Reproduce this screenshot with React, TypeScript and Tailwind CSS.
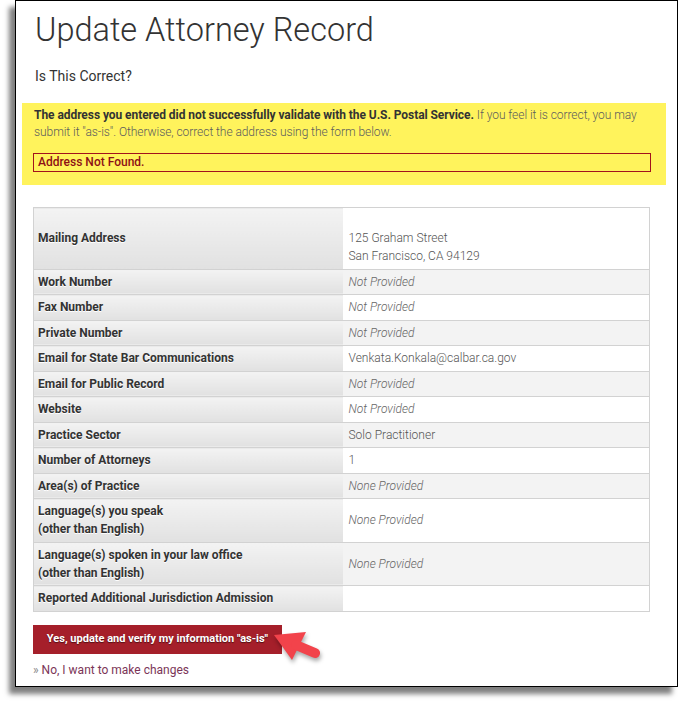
const rows: { label: string[]; value: string[]; empty?: boolean }[] = [
  { label: ['Mailing Address'], value: ['\u00a0', '125 Graham Street', 'San Francisco, CA 94129'] },
  { label: ['Work Number'], value: ['Not Provided'], empty: true },
  { label: ['Fax Number'], value: ['Not Provided'], empty: true },
  { label: ['Private Number'], value: ['Not Provided'], empty: true },
  { label: ['Email for State Bar Communications'], value: ['Venkata.Konkala@calbar.ca.gov'] },
  { label: ['Email for Public Record'], value: ['Not Provided'], empty: true },
  { label: ['Website'], value: ['Not Provided'], empty: true },
  { label: ['Practice Sector'], value: ['Solo Practitioner'] },
  { label: ['Number of Attorneys'], value: ['1'] },
  { label: ['Area(s) of Practice'], value: ['None Provided'], empty: true },
  { label: ['Language(s) you speak', '(other than English)'], value: ['None Provided'], empty: true },
  { label: ['Language(s) spoken in your law office', '(other than English)'], value: ['None Provided'], empty: true },
  { label: ['Reported Additional Jurisdiction Admission'], value: ['\u00a0'] },
];

// red callout arrow, drawn in page coordinates then shifted onto the button row
function Arrow() {
  return (
    <svg
      className="absolute left-[236px] top-0 drop-shadow-[1px_3px_2px_rgba(0,0,0,0.35)]"
      width="90"
      height="45"
      viewBox="0 0 90 45"
    >
      <g transform="translate(-269 -623)">
        <polygon points="274,633 306,630 292,658" fill="#f2434b" />
        <line x1="296" y1="643" x2="315" y2="651" stroke="#f2434b" strokeWidth="10" strokeLinecap="round" />
      </g>
    </svg>
  );
}

export default function App() {
  return (
    <div className="bg-white w-[678px] h-[701px] font-['Roboto',sans-serif]">
      <div className="ml-[15px] w-[663px] h-[687px] border border-black bg-white shadow-[-6px_7px_5px_rgba(0,0,0,0.5)]">
        <h1 className="pl-[19px] pt-[9px] text-[32.5px] leading-[40px] font-light text-[#333]">
          Update Attorney Record
        </h1>
        <p className="pl-[19px] mt-[16px] text-[14px] leading-[20px] text-[#333]">Is This Correct?</p>

        <div className="mt-[17px] ml-[6px] mr-[11px] bg-[#fff35c] pt-[4px] pb-[13px] pl-[12px] pr-[14px]">
          <p className="text-[12px] leading-[17px] text-[#5c5c5c] font-light tracking-[-0.06px]">
            <span className="font-bold text-[#333]">
              The address you entered did not successfully validate with the U.S. Postal Service.
            </span>{' '}
            If you feel it is correct, you may submit it "as-is". Otherwise, correct the address using the form below.
          </p>
          <div className="mt-[12px] -ml-[1px] mr-[1px] border border-[#a2121c] pl-[4px] text-[12px] leading-[17px] font-medium text-[#8e1016]">
            Address Not Found.
          </div>
        </div>

        <table className="mt-[22px] ml-[17px] w-[617px] border-collapse border border-[#d2d2d2] text-[12px]">
          <tbody>
            {rows.map((r, i) => (
              <tr key={r.label[0]} className="border-b border-[#d2d2d2]">
                <td className="w-[309px] pl-[4px] py-[3.25px] leading-[18px] font-bold text-[#333] align-middle bg-gradient-to-b from-[#f3f3f3] to-[#e1e1e1] [text-shadow:0_1px_0_#fff]">
                  {r.label.map((l) => (
                    <div key={l}>{l}</div>
                  ))}
                </td>
                <td
                  className={`pl-[6px] py-[3.25px] leading-[18px] align-middle font-light ${i % 2 === 1 ? 'bg-[#f3f3f3]' : 'bg-white'} ${r.empty ? 'italic text-[#666]' : 'text-[#555]'}`}
                >
                  {r.value.map((v, j) => (
                    <div key={j}>{v}</div>
                  ))}
                </td>
              </tr>
            ))}
          </tbody>
        </table>

        <div className="relative ml-[17px] mt-[13px]">
          <button className="w-[249px] h-[29px] bg-[#a51f2a] text-white text-[11px] font-bold [text-shadow:0_1px_1px_rgba(0,0,0,0.5)]">
            Yes, update and verify my information "as-is"
          </button>
          <Arrow />
          <div className="mt-[8px] text-[12px] leading-[16px]">
            <span className="text-[#888]">»</span> <span className="text-[#7b3557]">No, I want to make changes</span>
          </div>
        </div>
      </div>
    </div>
  );
}
